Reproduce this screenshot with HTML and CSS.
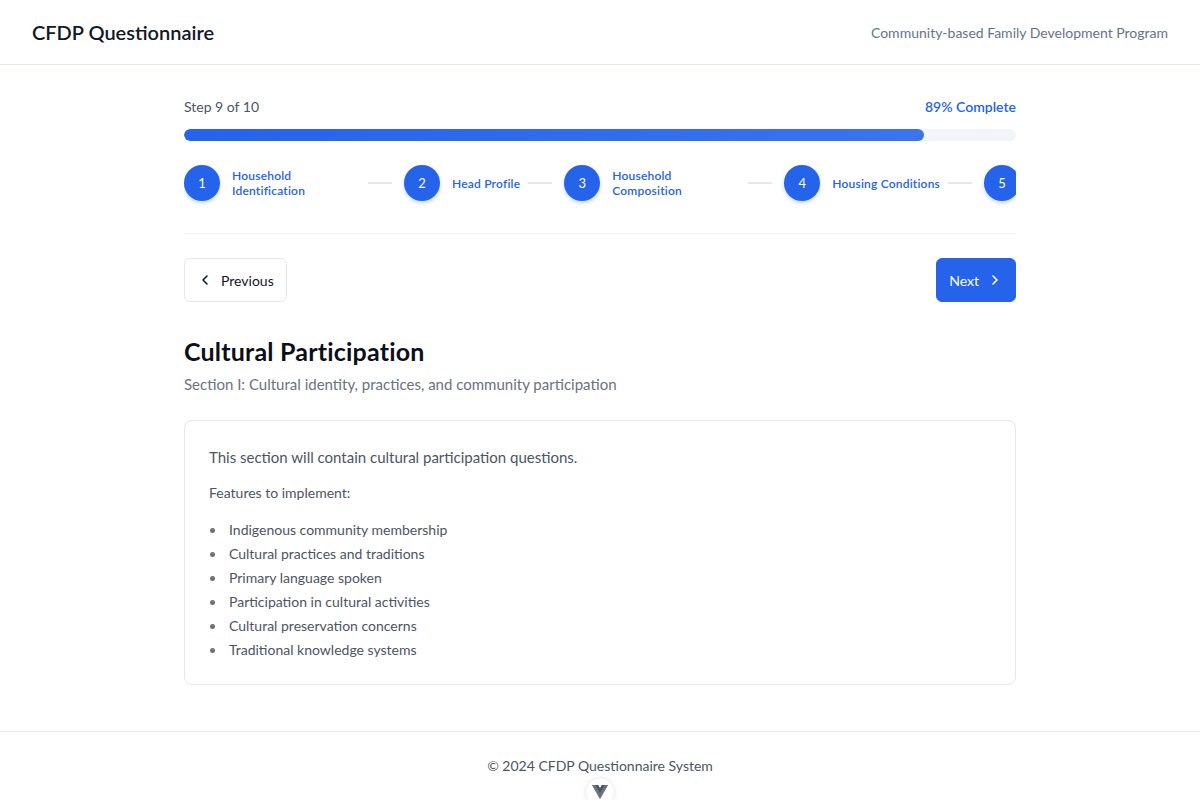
FILE: index.html
```html
<!DOCTYPE html>
<html lang="en">
<head>
<meta charset="utf-8">
<title>CFDP Questionnaire</title>
<link rel="stylesheet" href="styles.css">
</head>
<body>
<header class="topbar">
  <h1 class="brand">CFDP Questionnaire</h1>
  <span class="tagline">Community-based Family Development Program</span>
</header>

<main class="main">
  <div class="progress-head">
    <span class="step-count">Step 9 of 10</span>
    <span class="percent">89% Complete</span>
  </div>
  <div class="track"><div class="fill" style="width:89%"></div></div>

  <div class="steps">
    <div class="step"><span class="dot">1</span><span class="label">Household Identification</span></div>
    <span class="connector"></span>
    <div class="step"><span class="dot">2</span><span class="label">Head Profile</span></div>
    <span class="connector"></span>
    <div class="step"><span class="dot">3</span><span class="label">Household Composition</span></div>
    <span class="connector"></span>
    <div class="step"><span class="dot">4</span><span class="label">Housing Conditions</span></div>
    <span class="connector"></span>
    <div class="step"><span class="dot">5</span></div>
  </div>

  <div class="nav">
    <button class="btn btn-outline" type="button">
      <svg class="ico" viewBox="0 0 16 16" width="16" height="16"><path d="M10 4 6 8l4 4" fill="none" stroke="currentColor" stroke-width="1.6" stroke-linecap="round" stroke-linejoin="round"/></svg>
      <span>Previous</span>
    </button>
    <button class="btn btn-primary" type="button">
      <span>Next</span>
      <svg class="ico" viewBox="0 0 16 16" width="16" height="16"><path d="M6 4l4 4-4 4" fill="none" stroke="currentColor" stroke-width="1.6" stroke-linecap="round" stroke-linejoin="round"/></svg>
    </button>
  </div>

  <h2 class="title">Cultural Participation</h2>
  <p class="subtitle">Section I: Cultural identity, practices, and community participation</p>

  <section class="card">
    <p class="lead">This section will contain cultural participation questions.</p>
    <p class="small">Features to implement:</p>
    <ul class="features">
      <li>Indigenous community membership</li>
      <li>Cultural practices and traditions</li>
      <li>Primary language spoken</li>
      <li>Participation in cultural activities</li>
      <li>Cultural preservation concerns</li>
      <li>Traditional knowledge systems</li>
    </ul>
  </section>
</main>

<footer class="footer">
  <p class="copy">© 2024 CFDP Questionnaire System</p>
</footer>

<div class="devtools">
  <svg viewBox="0 0 256 221" width="16" height="14">
    <path d="M204.8 0H256L128 220.8 0 0h97.92L128 51.2 157.44 0h47.36Z" fill="#9ca3af"/>
    <path d="M0 0l128 220.8L256 0h-51.2L128 132.48 50.56 0H0Z" fill="#6b7280"/>
    <path d="M50.56 0L128 133.12 204.8 0h-47.36L128 51.2 97.92 0H50.56Z" fill="#4b5563"/>
  </svg>
</div>
</body>
</html>
```

FILE: styles.css
```css
* { box-sizing: border-box; }
html, body { margin: 0; padding: 0; }
body {
  font-family: Lato, "Open Sans", sans-serif;
  color: #111827;
  background: #ffffff;
}
.topbar {
  height: 65px;
  padding: 0 32px;
  display: flex;
  align-items: center;
  justify-content: space-between;
  border-bottom: 1px solid #e2e8f0;
}
.brand {
  margin: 0;
  font-size: 20px;
  font-weight: 600;
  color: #111827;
}
.tagline {
  font-size: 14px;
  color: #64748b;
}
.main {
  width: 832px;
  margin: 0 auto;
  padding: 32px 0 46px;
}
.progress-head {
  display: flex;
  justify-content: space-between;
  align-items: center;
  font-size: 14px;
  line-height: 20px;
  margin-bottom: 12px;
}
.step-count { color: #4b5563; }
.percent { color: #2563eb; font-weight: 600; }
.track {
  height: 12px;
  border-radius: 6px;
  background: #f1f5f9;
  overflow: hidden;
}
.fill {
  height: 100%;
  border-radius: 6px;
  background: linear-gradient(90deg, #2563eb, #3b74ec);
}
.steps {
  display: flex;
  align-items: center;
  margin-top: 24px;
  padding-bottom: 32px;
  border-bottom: 1px solid #eef0f3;
  overflow: hidden;
  white-space: nowrap;
}
.step {
  display: flex;
  align-items: center;
  flex-shrink: 0;
}
.dot {
  width: 36px;
  height: 36px;
  border-radius: 50%;
  background: #2563eb;
  color: #fff;
  font-size: 13px;
  display: flex;
  align-items: center;
  justify-content: center;
  flex-shrink: 0;
  box-shadow: 0 2px 4px rgba(37, 99, 235, 0.25);
}
.label {
  margin-left: 12px;
  max-width: 128px;
  white-space: normal;
  font-size: 12px;
  line-height: 15px;
  font-weight: 600;
  letter-spacing: 0.2px;
  color: #2563eb;
}
.connector {
  width: 24px;
  height: 2px;
  background: #e5e7eb;
  margin: 0 12px 0 8px;
  flex-shrink: 0;
}
.nav {
  display: flex;
  justify-content: space-between;
  margin-top: 24px;
}
.btn {
  height: 44px;
  padding: 0 12px;
  display: inline-flex;
  align-items: center;
  gap: 8px;
  font-family: inherit;
  font-size: 14px;
  border-radius: 6px;
  cursor: pointer;
}
.btn-outline {
  background: #fff;
  border: 1px solid #e5e7eb;
  color: #111827;
}
.btn-primary {
  background: #2563eb;
  border: 1px solid #2563eb;
  color: #fff;
}
.ico { display: block; }
.title {
  margin: 33px 0 0;
  font-size: 25px;
  line-height: 32px;
  font-weight: 700;
  letter-spacing: 0.2px;
  color: #0b0f19;
}
.subtitle {
  margin: 5px 0 0;
  font-size: 15px;
  line-height: 24px;
  color: #6b7280;
}
.card {
  margin-top: 24px;
  border: 1px solid #e5e7eb;
  border-radius: 8px;
  padding: 24px;
}
.lead {
  margin: 0 0 14px;
  font-size: 15px;
  line-height: 24px;
  color: #4b5563;
}
.small {
  margin: 0 0 17px;
  font-size: 14px;
  line-height: 20px;
  color: #4b5563;
}
.features {
  list-style: none;
  margin: 0;
  padding: 0;
  font-size: 14px;
  line-height: 20px;
  color: #4b5563;
}
.features li {
  display: flex;
  align-items: center;
  margin-top: 4px;
}
.features li:first-child { margin-top: 0; }
.features li::before {
  content: "";
  width: 5px;
  height: 5px;
  border-radius: 50%;
  background: #6b7280;
  margin: 0 14px 0 1px;
  flex-shrink: 0;
}
.footer {
  border-top: 1px solid #e5e7eb;
  padding: 24px 0;
  text-align: center;
}
.copy {
  margin: 0;
  font-size: 14px;
  line-height: 20px;
  color: #4b5563;
}
.devtools {
  position: fixed;
  left: 585px;
  top: 777px;
  width: 30px;
  height: 30px;
  border-radius: 50%;
  background: #fff;
  border: 1px solid #eceef1;
  box-shadow: 0 1px 4px rgba(0, 0, 0, 0.08);
  display: flex;
  align-items: center;
  justify-content: center;
}
```
